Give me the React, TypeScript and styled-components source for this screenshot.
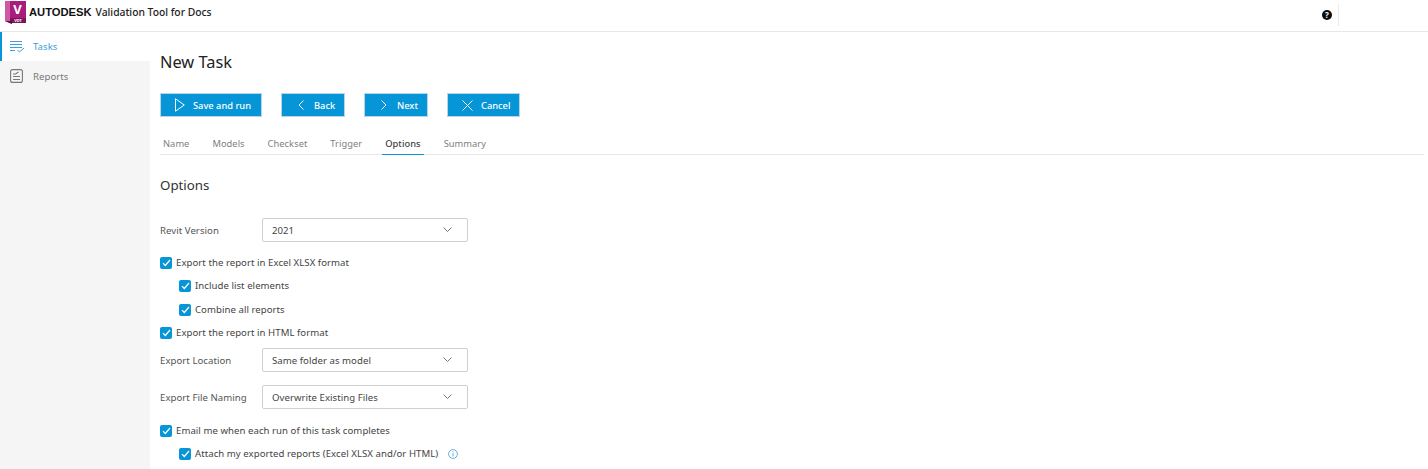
import React from "react";
import styled, { createGlobalStyle } from "styled-components";

const GlobalStyle = createGlobalStyle`
  html, body {
    margin: 0;
    padding: 0;
    height: 469px;
    overflow: hidden;
    background: #fff;
    font-family: "Noto Sans", "Open Sans", sans-serif;
  }
  * { box-sizing: border-box; }
`;

const Page = styled.div`
  width: 1428px;
  height: 469px;
  display: flex;
  flex-direction: column;
  overflow: hidden;
`;

const Header = styled.header`
  height: 32px;
  flex: none;
  display: flex;
  align-items: flex-start;
  border-bottom: 1px solid #e8e8e8;
  padding-left: 5px;
`;

const Brand = styled.div`
  display: flex;
  align-items: center;
  height: 24px;
  gap: 3px;
`;

const BrandName = styled.span`
  font-family: "Liberation Sans", sans-serif;
  font-weight: 700;
  font-size: 11.2px;
  color: #111;
`;

const BrandTool = styled.span`
  margin-left: 1px;
  font-size: 10.3px;
  font-weight: 500;
  color: #222;
`;

const HeaderRight = styled.div`
  margin-left: auto;
  display: flex;
  align-items: center;
  height: 26px;
  margin-top: 2px;
  width: 106px;
`;

const HelpBadge = styled.div`
  width: 10px;
  height: 10px;
  border-radius: 50%;
  background: #0c0c0c;
  color: #fff;
  font-size: 8px;
  font-weight: 700;
  line-height: 10px;
  text-align: center;
  margin-right: 6px;
`;

const Divider = styled.div`
  width: 1px;
  height: 22px;
  background: #ececec;
`;

const Body = styled.div`
  flex: 1;
  display: flex;
  min-height: 0;
`;

const Sidebar = styled.aside`
  width: 150px;
  flex: none;
  background: #f5f5f5;
`;

const NavItem = styled.div<{ $active?: boolean }>`
  height: ${(p) => (p.$active ? 29 : 30)}px;
  display: flex;
  align-items: center;
  gap: ${(p) => (p.$active ? 8 : 10)}px;
  padding-left: ${(p) => (p.$active ? "8px" : "10px")};
  background: ${(p) => (p.$active ? "#fff" : "transparent")};
  border-left: ${(p) => (p.$active ? "2px solid #0696d7" : "none")};
  color: ${(p) => (p.$active ? "#3c9fd6" : "#777")};
  font-size: 9.6px;
  letter-spacing: 0.05px;
`;

const Main = styled.main`
  flex: 1;
  padding: 0 4px 0 10px;
  min-width: 0;
`;

const Title = styled.h1`
  margin: 0;
  height: 61px;
  padding-top: 16px;
  font-size: 16.4px;
  line-height: 28px;
  font-weight: 400;
  color: #222;
`;

const Toolbar = styled.div`
  display: flex;
  gap: 19px;
  height: 24px;
`;

const ActionButton = styled.button<{ $width: number; $pad: number; $gap: number }>`
  width: ${(p) => p.$width}px;
  height: 24px;
  padding: 0 0 0 ${(p) => p.$pad}px;
  display: flex;
  align-items: center;
  gap: ${(p) => p.$gap}px;
  border: 1px solid #b9d4e4;
  background: #0696d7;
  color: #fff;
  font-family: inherit;
  font-size: 9.3px;
  font-weight: 500;
`;

const Tabs = styled.div`
  display: flex;
  margin-top: 14px;
  height: 24px;
  gap: 17px;
  border-bottom: 1px solid #e6e6e6;
`;

const Tab = styled.div<{ $active?: boolean }>`
  height: 24px;
  padding: 0 3px;
  line-height: 25px;
  font-size: 9.3px;
  letter-spacing: 0.05px;
  color: ${(p) => (p.$active ? "#444" : "#808080")};
  font-weight: ${(p) => (p.$active ? 500 : 400)};
  border-bottom: ${(p) => (p.$active ? "1px solid #0696d7" : "none")};
`;

const SectionTitle = styled.h2`
  margin: 0;
  height: 63px;
  padding-top: 20px;
  font-size: 13.3px;
  line-height: 20px;
  font-weight: 400;
  color: #333;
`;

const FieldRow = styled.div<{ $gapAfter: number }>`
  display: flex;
  align-items: center;
  height: 24px;
  margin-bottom: ${(p) => p.$gapAfter}px;
`;

const FieldLabel = styled.label`
  width: 102px;
  font-size: 9.6px;
  color: #555;
  letter-spacing: 0.05px;
`;

const SelectBox = styled.div`
  width: 206px;
  height: 24px;
  display: flex;
  align-items: center;
  justify-content: space-between;
  padding: 0 15px 0 9px;
  border: 1px solid #cfcfcf;
  border-radius: 2px;
  font-size: 9.6px;
  color: #444;
  letter-spacing: 0.05px;
`;

const CheckRow = styled.div<{ $nested?: boolean; $gapAfter: number }>`
  display: flex;
  align-items: center;
  gap: 4px;
  height: 13px;
  padding-left: ${(p) => (p.$nested ? 19 : 0)}px;
  margin-bottom: ${(p) => p.$gapAfter}px;
  font-size: 9.6px;
  color: #444;
  letter-spacing: 0.05px;
  white-space: nowrap;
`;

const CheckBox = styled.span`
  width: 12px;
  height: 12px;
  flex: none;
  display: flex;
  align-items: center;
  justify-content: center;
  border-radius: 2px;
  background: #0696d7;
`;

const InfoIcon = styled.svg`
  margin-left: 6px;
`;

const Logo = () => (
  <svg width="21" height="24" viewBox="0 0 21 24">
    <path d="M0 1h21v18H7v5L0 21z" fill="#a81c7e" />
    <path d="M0 1h5v20H0z" fill="#cf5aa2" />
    <path d="M5 18h16v5H5z" fill="#7c1459" />
    <path d="M0 21l7 0v3z" fill="#5f0f44" />
    <text x="12.500" y="14" textAnchor="middle" fontFamily="Noto Sans" fontWeight="700" fontSize="13" fill="#fff">
      V
    </text>
    <text x="13" y="22.300" textAnchor="middle" fontFamily="Noto Sans" fontWeight="700" fontSize="4" fill="#fff">
      VDT
    </text>
  </svg>
);

const TasksIcon = () => (
  <svg width="15" height="13" viewBox="0 0 15 13" fill="none" stroke="#3c9fd6" strokeWidth="1">
    <path d="M0 1.500h12M0 4.500h12M0 7.500h12M0 10.500h5" />
    <path d="M7.500 10l2 2 4.500-4" />
  </svg>
);

const ReportsIcon = () => (
  <svg width="13" height="14" viewBox="0 0 13 14" fill="none" stroke="#777" strokeWidth="1.100">
    <rect x="0.600" y="0.600" width="11.800" height="12.800" rx="2" />
    <path d="M3 5h2.500L8.500 3M3 7.500h7M3 10.500h7" />
  </svg>
);

const PlayIcon = () => (
  <svg width="10" height="14" viewBox="0 0 10 14" fill="none" stroke="#fff" strokeWidth="1">
    <path d="M0.500 0.800v12.400L9.300 7z" />
  </svg>
);

const BackIcon = () => (
  <svg width="6" height="10" viewBox="0 0 6 10" fill="none" stroke="#fff" strokeWidth="1">
    <path d="M5.500 0.500L1 5l4.500 4.500" />
  </svg>
);

const NextIcon = () => (
  <svg width="6" height="10" viewBox="0 0 6 10" fill="none" stroke="#fff" strokeWidth="1">
    <path d="M0.500 0.500L5 5 0.500 9.500" />
  </svg>
);

const CloseIcon = () => (
  <svg width="11" height="11" viewBox="0 0 11 11" fill="none" stroke="#fff" strokeWidth="1">
    <path d="M0.500 0.500l10 10M10.500 0.500l-10 10" />
  </svg>
);

const Chevron = () => (
  <svg width="9" height="6" viewBox="0 0 9 6" fill="none" stroke="#777" strokeWidth="1">
    <path d="M0.500 0.500L4.500 4.500l4-4" />
  </svg>
);

const Tick = () => (
  <svg width="9" height="8" viewBox="0 0 9 8" fill="none" stroke="#fff" strokeWidth="1.200">
    <path d="M1 4.200l2.300 2.300L8 1" />
  </svg>
);

const Check: React.FC<{ nested?: boolean; gapAfter: number; children: React.ReactNode }> = ({
  nested,
  gapAfter,
  children,
}) => (
  <CheckRow $nested={nested} $gapAfter={gapAfter}>
    <CheckBox>
      <Tick />
    </CheckBox>
    {children}
  </CheckRow>
);

const Select: React.FC<{ label: string; value: string; gapAfter: number }> = ({ label, value, gapAfter }) => (
  <FieldRow $gapAfter={gapAfter}>
    <FieldLabel>{label}</FieldLabel>
    <SelectBox>
      {value}
      <Chevron />
    </SelectBox>
  </FieldRow>
);

const tabs = ["Name", "Models", "Checkset", "Trigger", "Options", "Summary"];

export default function App() {
  return (
    <Page>
      <GlobalStyle />
      <Header>
        <Brand>
          <Logo />
          <BrandName>AUTODESK</BrandName>
          <BrandTool>Validation Tool for Docs</BrandTool>
        </Brand>
        <HeaderRight>
          <HelpBadge>?</HelpBadge>
          <Divider />
        </HeaderRight>
      </Header>
      <Body>
        <Sidebar>
          <NavItem $active>
            <TasksIcon />
            Tasks
          </NavItem>
          <NavItem>
            <ReportsIcon />
            Reports
          </NavItem>
        </Sidebar>
        <Main>
          <Title>New Task</Title>
          <Toolbar>
            <ActionButton $width={102} $pad={14} $gap={8}>
              <PlayIcon />
              Save and run
            </ActionButton>
            <ActionButton $width={64} $pad={16} $gap={10}>
              <BackIcon />
              Back
            </ActionButton>
            <ActionButton $width={64} $pad={16} $gap={10}>
              <NextIcon />
              Next
            </ActionButton>
            <ActionButton $width={73} $pad={14} $gap={8}>
              <CloseIcon />
              Cancel
            </ActionButton>
          </Toolbar>
          <Tabs>
            {tabs.map((t) => (
              <Tab key={t} $active={t === "Options"}>
                {t}
              </Tab>
            ))}
          </Tabs>
          <SectionTitle>Options</SectionTitle>
          <Select label="Revit Version" value="2021" gapAfter={14} />
          <Check gapAfter={10}>Export the report in Excel XLSX format</Check>
          <Check nested gapAfter={11}>
            Include list elements
          </Check>
          <Check nested gapAfter={10}>
            Combine all reports
          </Check>
          <Check gapAfter={9}>Export the report in HTML format</Check>
          <Select label="Export Location" value="Same folder as model" gapAfter={13} />
          <Select label="Export File Naming" value="Overwrite Existing Files" gapAfter={15} />
          <Check gapAfter={10}>Email me when each run of this task completes</Check>
          <Check nested gapAfter={0}>
            Attach my exported reports (Excel XLSX and/or HTML)
            <InfoIcon width="10" height="10" viewBox="0 0 10 10" fill="none" stroke="#3c9fd6" strokeWidth="0.8">
              <circle cx="5" cy="5" r="4.400" />
              <path d="M5 4.200v3.200M5 2.400v1" />
            </InfoIcon>
          </Check>
        </Main>
      </Body>
    </Page>
  );
}
